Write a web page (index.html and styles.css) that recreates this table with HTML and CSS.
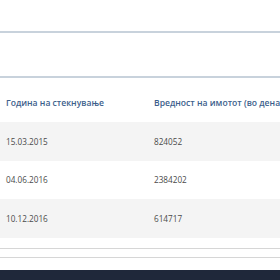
FILE: index.html
```html
<!DOCTYPE html>
<html lang="mk">
<head>
  <meta charset="UTF-8" />
  <meta name="viewport" content="width=device-width, initial-scale=1.0" />
  <title>Имот</title>
  <link rel="stylesheet" href="styles.css">
</head>
<body>
  <div class="panel-top"></div>
  <div class="panel-tabs"></div>

  <table class="assets">
    <thead>
      <tr>
        <th>Година на стекнување</th>
        <th>Вредност на имотот (во денари)</th>
      </tr>
    </thead>
    <tbody>
      <tr><td>15.03.2015</td><td>824052</td></tr>
      <tr><td>04.06.2016</td><td>2384202</td></tr>
      <tr><td>10.12.2016</td><td>614717</td></tr>
    </tbody>
  </table>

  <div class="rule"></div>
  <div class="rule second"></div>

  <footer></footer>
</body>
</html>
```

FILE: styles.css
```css
html, body {
  margin: 0;
  padding: 0;
  background: #fff;
  font-family: "Open Sans", Arial, sans-serif;
  overflow: hidden;
}
.panel-top {
  height: 31px;
  border-bottom: 2px solid #c8d2dc;
}
.panel-tabs {
  height: 43px;
  border-bottom: 2px solid #c8d2dc;
}
table.assets {
  width: 100%;
  border-collapse: collapse;
  table-layout: fixed;
  margin-top: 6px;
}
table.assets th,
table.assets td {
  text-align: left;
  white-space: nowrap;
  padding: 0 0 0 6px;
}
table.assets th:first-child,
table.assets td:first-child {
  width: 142px;
}
table.assets th {
  height: 38px;
  font-size: 8.6px;
  font-weight: 600;
  color: #3d5f8c;
}
table.assets td {
  height: 38.5px;
  font-size: 8.2px;
  font-weight: 500;
  color: #4a4a4a;
}
table.assets tbody tr:nth-child(odd) {
  background: #f4f4f4;
}
.rule {
  margin-top: 10px;
  border-top: 1px solid #d6d6d6;
  height: 0;
}
.rule.second {
  margin-top: 8px;
}
footer {
  margin-top: 12px;
  height: 20px;
  background: #1f283a;
}
```
